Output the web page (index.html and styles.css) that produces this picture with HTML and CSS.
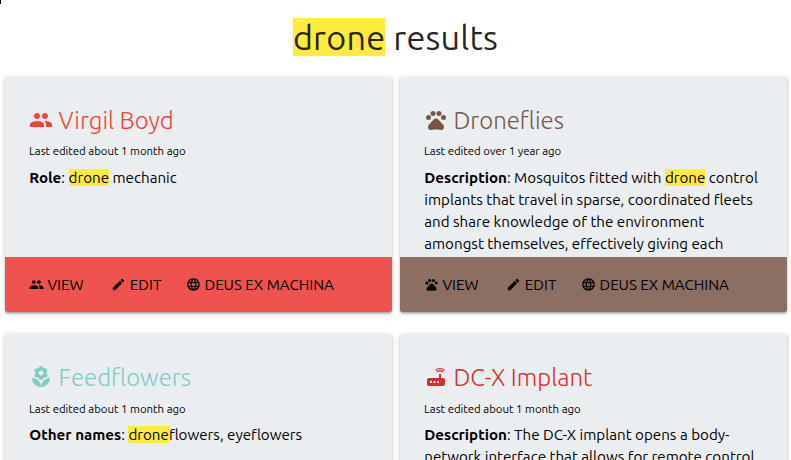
FILE: index.html
```html
<!DOCTYPE html>
<html lang="en">
<head>
<meta charset="utf-8">
<title>drone results</title>
<link rel="stylesheet" href="styles.css">
</head>
<body>
<svg class="sprite" aria-hidden="true">
  <symbol id="people" viewBox="0 0 24 24"><path d="M16 11c1.66 0 2.99-1.34 2.99-3S17.66 5 16 5c-1.66 0-3 1.34-3 3s1.34 3 3 3zm-8 0c1.66 0 2.99-1.34 2.99-3S9.66 5 8 5C6.34 5 5 6.34 5 8s1.34 3 3 3zm0 2c-2.33 0-7 1.17-7 3.5V19h14v-2.5c0-2.33-4.67-3.5-7-3.5zm8 0c-.29 0-.62.02-.97.05 1.16.84 1.97 1.97 1.97 3.45V19h6v-2.5c0-2.33-4.67-3.5-7-3.5z"/></symbol>
  <symbol id="pets" viewBox="0 0 24 24"><circle cx="4.5" cy="9.5" r="2.5"/><circle cx="9" cy="5.5" r="2.5"/><circle cx="15" cy="5.5" r="2.5"/><circle cx="19.5" cy="9.5" r="2.5"/><path d="M17.34 14.86c-.87-1.02-1.6-1.89-2.48-2.91-.46-.54-1.05-1.08-1.75-1.32-.11-.04-.22-.07-.33-.09-.25-.04-.52-.04-.78-.04s-.53 0-.79.05c-.11.02-.22.05-.33.09-.7.24-1.28.78-1.75 1.32-.87 1.02-1.6 1.89-2.48 2.91-1.31 1.31-2.92 2.76-2.62 4.79.29 1.02 1.02 2.03 2.33 2.32.73.15 3.06-.44 5.54-.44h.18c2.48 0 4.81.58 5.54.44 1.31-.29 2.04-1.31 2.33-2.32.31-2.04-1.3-3.49-2.61-4.8z"/></symbol>
  <symbol id="edit" viewBox="0 0 24 24"><path d="M3 17.25V21h3.75L17.81 9.94l-3.75-3.75L3 17.25zM20.71 7.04c.39-.39.39-1.02 0-1.41l-2.34-2.34c-.39-.39-1.02-.39-1.41 0l-1.83 1.83 3.75 3.75 1.83-1.83z"/></symbol>
  <symbol id="globe" viewBox="0 0 24 24"><path d="M11.99 2C6.47 2 2 6.48 2 12s4.47 10 9.99 10C17.52 22 22 17.52 22 12S17.52 2 11.99 2zm6.93 6h-2.95c-.32-1.25-.78-2.45-1.38-3.56 1.84.63 3.37 1.91 4.33 3.56zM12 4.04c.83 1.2 1.48 2.53 1.91 3.96h-3.82c.43-1.43 1.08-2.76 1.91-3.96zM4.26 14C4.1 13.36 4 12.69 4 12s.1-1.36.26-2h3.38c-.08.66-.14 1.32-.14 2 0 .68.06 1.34.14 2H4.26zm.82 2h2.95c.32 1.25.78 2.45 1.38 3.56-1.84-.63-3.37-1.9-4.33-3.56zm2.95-8H5.08c.96-1.66 2.49-2.93 4.33-3.56C8.81 5.55 8.35 6.75 8.03 8zM12 19.96c-.83-1.2-1.48-2.53-1.91-3.96h3.82c-.43 1.43-1.08 2.76-1.91 3.96zM14.34 14H9.66c-.09-.66-.16-1.32-.16-2 0-.68.07-1.35.16-2h4.68c.09.65.16 1.32.16 2 0 .68-.07 1.34-.16 2zm.25 5.56c.6-1.11 1.06-2.31 1.38-3.56h2.95c-.96 1.65-2.49 2.93-4.33 3.56zM16.36 14c.08-.66.14-1.32.14-2 0-.68-.06-1.34-.14-2h3.38c.16.64.26 1.31.26 2s-.1 1.36-.26 2h-3.38z"/></symbol>
  <symbol id="florist" viewBox="0 0 24 24"><path d="M12 22c4.97 0 9-4.03 9-9-4.97 0-9 4.03-9 9zM5.6 10.25c0 1.38 1.12 2.5 2.5 2.5.53 0 1.01-.16 1.42-.44l-.02.19c0 1.38 1.12 2.5 2.5 2.5s2.5-1.12 2.5-2.5l-.02-.19c.4.28.89.44 1.42.44 1.38 0 2.5-1.12 2.5-2.5 0-1-.59-1.85-1.43-2.25.84-.4 1.43-1.25 1.43-2.25 0-1.38-1.12-2.5-2.5-2.5-.53 0-1.01.16-1.42.44l.02-.19C14.5 2.12 13.38 1 12 1S9.5 2.12 9.5 3.5l.02.19c-.4-.28-.89-.44-1.42-.44-1.38 0-2.5 1.12-2.5 2.5 0 1 .59 1.85 1.43 2.25-.84.4-1.43 1.25-1.43 2.25zM12 5.5c1.38 0 2.5 1.12 2.5 2.5s-1.12 2.5-2.5 2.5S9.5 9.38 9.5 8s1.12-2.5 2.5-2.5zM3 13c0 4.97 4.03 9 9 9 0-4.97-4.03-9-9-9z"/></symbol>
  <symbol id="router" viewBox="0 0 24 24"><path d="M20.2 5.9l.8-.8C19.6 3.7 17.8 3 16 3s-3.6.7-5 2.1l.8.8C13 4.8 14.5 4.2 16 4.2s3 .6 4.2 1.7zm-.9.8c-.9-.9-2.1-1.4-3.3-1.4s-2.4.5-3.3 1.4l.8.8c.7-.7 1.6-1 2.5-1 .9 0 1.8.3 2.5 1l.8-.8zM19 13h-2V9h-2v4H5c-1.1 0-2 .9-2 2v4c0 1.1.9 2 2 2h14c1.1 0 2-.9 2-2v-4c0-1.1-.9-2-2-2zM8 18H6v-2h2v2zm3.5 0h-2v-2h2v2zm3.5 0h-2v-2h2v2z"/></symbol>
</svg>
<div class="caret"></div>
<h4 class="heading"><mark>drone</mark> results</h4>
<main class="results">
  <article class="card">
    <div class="content">
      <h5 class="title red-text"><svg><use href="#people"/></svg><span>Virgil Boyd</span></h5>
      <p class="edited">Last edited about 1 month ago</p>
      <p class="text"><b>Role</b>: <mark>drone</mark> mechanic</p>
    </div>
    <div class="actions red">
      <a class="view"><svg><use href="#people"/></svg>VIEW</a>
      <a class="edit"><svg><use href="#edit"/></svg>EDIT</a>
      <a class="universe"><svg><use href="#globe"/></svg>DEUS EX MACHINA</a>
    </div>
  </article>
  <article class="card">
    <div class="content">
      <h5 class="title brown-text"><svg><use href="#pets"/></svg><span>Droneflies</span></h5>
      <p class="edited">Last edited over 1 year ago</p>
      <p class="text"><b>Description</b>: Mosquitos fitted with <mark>drone</mark> control implants that travel in sparse, coordinated fleets and share knowledge of the environment amongst themselves, effectively giving each</p>
    </div>
    <div class="actions brown">
      <a class="view"><svg><use href="#pets"/></svg>VIEW</a>
      <a class="edit"><svg><use href="#edit"/></svg>EDIT</a>
      <a class="universe"><svg><use href="#globe"/></svg>DEUS EX MACHINA</a>
    </div>
  </article>
  <article class="card">
    <div class="content lower">
      <h5 class="title teal-text"><svg><use href="#florist"/></svg><span>Feedflowers</span></h5>
      <p class="edited">Last edited about 1 month ago</p>
      <p class="text"><b>Other names</b>: <mark>drone</mark>flowers, eyeflowers</p>
    </div>
  </article>
  <article class="card">
    <div class="content lower">
      <h5 class="title crimson-text"><svg><use href="#router"/></svg><span>DC-X Implant</span></h5>
      <p class="edited">Last edited about 1 month ago</p>
      <p class="text"><b>Description</b>: The DC-X implant opens a body-<br>network interface that allows for remote control</p>
    </div>
  </article>
</main>
</body>
</html>
```
FILE: styles.css
```css
* { box-sizing: border-box; }
html, body { height: 460px; overflow: hidden; }
body {
  margin: 0;
  background: #fff;
  color: #000;
  font: 15.17px/22px Ubuntu, "Noto Sans", sans-serif;
}
h4, h5, p { margin: 0; }
svg { fill: currentColor; flex: none; }
.sprite { position: absolute; width: 0; height: 0; }
.caret { position: absolute; left: 0; top: 0; width: 1px; height: 4px; background: #000; }

.heading {
  height: 77px;
  padding-top: 18px;
  text-align: center;
  font-size: 34.2px;
  letter-spacing: .2px;
  line-height: 38px;
  font-weight: 400;
  color: rgba(0, 0, 0, .87);
  white-space: nowrap;
}
mark {
  background: #ffeb3b;
  color: inherit;
}

.results {
  display: grid;
  grid-template-columns: 387px 387px;
  grid-auto-rows: 235px;
  column-gap: 8px;
  row-gap: 22px;
  padding-left: 5px;
}
.card {
  border-radius: 2px;
  background: #ebeef1;
  overflow: hidden;
  box-shadow: 0 2px 2px 0 rgba(0, 0, 0, .14), 0 3px 1px -2px rgba(0, 0, 0, .12), 0 1px 5px 0 rgba(0, 0, 0, .2);
}
.content { height: 180px; padding: 24px 24px 0; overflow: hidden; }
.title {
  display: flex;
  align-items: center;
  gap: 5.5px;
  height: 38px;
  font-size: 24px;
  font-weight: 300;
}
.title span { line-height: 32px; padding-top: 1px; }
.title svg { width: 24px; height: 24px; }
.edited { margin-top: 1px; font-size: 11.38px; line-height: 22px; }
.text { margin-top: 5px; padding-left: .25px; font-variant-ligatures: none; }
.lower .edited { margin-top: 2px; }
.lower .text { margin-top: 4px; }
.red-text { color: #f44336; }
.brown-text { color: #795548; }
.teal-text { color: #80cbc4; }
.crimson-text { color: #d32f2f; }

.actions {
  display: flex;
  align-items: center;
  height: 55px;
  padding: 0 24px;
  white-space: nowrap;
}
.actions a { display: flex; align-items: center; gap: 3.5px; }
.actions svg { width: 15px; height: 15px; }
.red { background: #ef5350; }
.brown { background: #8d6e63; }
.view { width: 82.3px; }
.edit { width: 74.7px; }
```
